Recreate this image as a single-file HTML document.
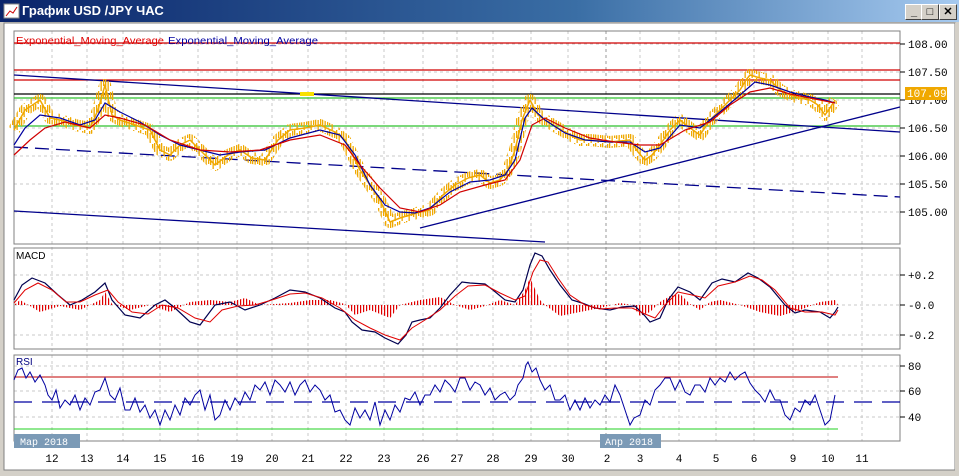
<!DOCTYPE html>
<html><head><meta charset="utf-8"><style>
body{margin:0;width:959px;height:476px;overflow:hidden;background:#d4d0c8;font-family:"Liberation Sans",sans-serif}
.tb{position:absolute;left:0;top:0;width:959px;height:22px;background:linear-gradient(90deg,#0a246a,#3a6ea5 60%,#a6caf0);}
.tt{position:absolute;left:22px;top:3px;color:#fff;font-weight:bold;font-size:13px;font-family:"Liberation Sans","DejaVu Sans",sans-serif}
.btn{position:absolute;top:4px;width:16px;height:14px;background:#d4d0c8;border:1px solid;border-color:#fff #404040 #404040 #fff;font-size:11px;font-weight:bold;text-align:center;line-height:14px}
svg{position:absolute;left:0;top:0}
</style></head><body>
<div class="tb"></div>
<svg width="18" height="18" style="left:3px;top:3px"><rect x="1" y="1" width="15" height="14" fill="#fff" stroke="#888"/><polyline points="3,13 7,8 10,10 14,4" stroke="#c00" fill="none"/></svg>
<div class="tt">График USD /JPY  ЧАС</div>
<div class="btn" style="left:905px">_</div><div class="btn" style="left:921px">□</div><div class="btn" style="left:939px">✕</div>
<svg width="959" height="476" style="top:0" font-family="Liberation Sans,sans-serif">
<defs>
<pattern id="hb" width="3" height="10" patternUnits="userSpaceOnUse"><rect width="1.2" height="10" fill="#e00000"/></pattern>
<pattern id="ob" width="7" height="13" patternUnits="userSpaceOnUse"><rect x="0" y="0" width="1.3" height="9" fill="#f0a800"/><rect x="2.5" y="3" width="1.3" height="10" fill="#f0a800"/><rect x="5" y="1" width="1.3" height="7" fill="#f0a800"/></pattern>
</defs>
<rect x="4" y="23" width="951" height="447" fill="#fff" stroke="#808080"/>
<rect x="955" y="23" width="4" height="453" fill="#d4d0c8"/>
<g stroke="#c8c8c8" stroke-dasharray="3,3">
<path d="M52 31V441M87 31V441M123 31V441M160 31V441M198 31V441M237 31V441M272 31V441M308 31V441M346 31V441M384 31V441M423 31V441M457 31V441M493 31V441M531 31V441M568 31V441M640 31V441M679 31V441M716 31V441M754 31V441M793 31V441M828 31V441M862 31V441"/>
<path d="M14 44H900M14 72H900M14 100H900M14 128H900M14 156H900M14 184H900M14 212H900M14 275H900M14 305H900M14 335H900M14 366H900M14 391H900M14 417H900"/>
</g>
<path d="M606 31V441" stroke="#999" stroke-dasharray="3,3"/>
<g fill="none" stroke="#808080"><rect x="14" y="31" width="886" height="213"/><rect x="14" y="248" width="886" height="101"/><rect x="14" y="355" width="886" height="86"/></g>
<g stroke-width="1.2">
<path d="M14 43H900M14 70H900M14 80H900" stroke="#d00000"/>
<path d="M14 94H900" stroke="#000"/>
<path d="M14 98H900M14 126H900" stroke="#2cc02c"/>
</g>
<text x="16" y="44" font-size="10" fill="#e00000" textLength="148" lengthAdjust="spacingAndGlyphs">Exponential_Moving_Average</text>
<text x="168" y="44" font-size="10" fill="#0000a0" textLength="150" lengthAdjust="spacingAndGlyphs">Exponential_Moving_Average</text>
<g stroke="#00008b" stroke-width="1.3" fill="none">
<path d="M14 75L900 132"/>
<path d="M14 147L900 197" stroke-dasharray="14,7"/>
<path d="M14 211L545 242"/>
<path d="M420 228L900 107"/>
</g>
<g fill="none" stroke-linejoin="round">
<polyline stroke="url(#ob)" stroke-width="12" points="14,130 25,110 40,100 50,118 60,120 75,125 90,128 98,110 105,85 112,115 120,120 135,125 150,130 160,150 170,155 180,145 190,140 200,150 215,165 228,155 240,150 252,158 265,160 278,140 290,130 305,128 320,125 335,132 345,140 355,160 360,170 370,185 380,200 390,222 400,218 410,215 420,212 430,210 443,195 455,185 468,178 480,175 490,183 500,180 508,170 515,150 522,120 530,100 538,115 545,120 558,128 570,135 580,140 590,140 610,142 630,140 638,152 645,160 652,155 660,145 670,130 680,120 690,128 700,135 710,120 720,110 730,100 740,90 746,80 750,75 760,78 770,80 780,90 790,95 800,98 810,100 818,105 825,115 830,108 835,100"/>
<polyline stroke="#f0a800" stroke-width="1.5" points="14,130 25,110 40,100 50,118 60,120 75,125 90,128 98,110 105,85 112,115 120,120 135,125 150,130 160,150 170,155 180,145 190,140 200,150 215,165 228,155 240,150 252,158 265,160 278,140 290,130 305,128 320,125 335,132 345,140 355,160 360,170 370,185 380,200 390,222 400,218 410,215 420,212 430,210 443,195 455,185 468,178 480,175 490,183 500,180 508,170 515,150 522,120 530,100 538,115 545,120 558,128 570,135 580,140 590,140 610,142 630,140 638,152 645,160 652,155 660,145 670,130 680,120 690,128 700,135 710,120 720,110 730,100 740,90 746,80 750,75 760,78 770,80 780,90 790,95 800,98 810,100 818,105 825,115 830,108 835,100"/>
</g>
<polyline fill="none" stroke="#0000a0" stroke-width="1.2" points="14,145 25,128 40,115 60,118 80,125 95,120 105,103 120,112 140,122 160,135 180,145 200,150 220,155 240,152 265,150 290,138 320,130 340,135 355,155 370,185 385,205 400,212 415,213 430,208 450,192 470,182 490,180 505,175 515,160 525,118 532,108 545,120 565,133 585,140 610,142 630,142 645,152 660,148 680,125 700,128 720,112 740,95 755,82 770,85 790,92 810,97 825,100 835,103"/>
<polyline fill="none" stroke="#d00000" stroke-width="1.2" points="14,155 30,140 45,128 65,122 90,128 105,115 120,118 145,125 170,140 200,150 230,152 260,150 290,140 320,135 345,145 360,165 380,188 400,208 420,212 440,205 460,192 485,185 505,180 520,160 532,125 545,118 565,128 590,138 615,142 640,145 660,145 685,130 710,122 730,105 750,92 770,88 790,94 810,98 835,103"/>
<rect x="300" y="92" width="14" height="4" fill="#f8e000"/>
<g font-size="11" fill="#000" font-family="Liberation Mono,monospace">
<path d="M900 44h5M900 72h5M900 100h5M900 128h5M900 156h5M900 184h5M900 212h5M900 275h5M900 305h5M900 335h5M900 366h5M900 391h5M900 417h5" stroke="#000"/>
<text x="908" y="48">108.00</text><text x="908" y="76">107.50</text><text x="908" y="104">107.00</text><text x="908" y="132">106.50</text><text x="908" y="160">106.00</text><text x="908" y="188">105.50</text><text x="908" y="216">105.00</text>
<rect x="905" y="87" width="42" height="13" fill="#f0a800"/><text x="907" y="97" fill="#fff">107.09</text>
<text x="908" y="279">+0.2</text><text x="908" y="309">-0.0</text><text x="908" y="339">-0.2</text>
<text x="908" y="370">80</text><text x="908" y="395">60</text><text x="908" y="421">40</text>
</g>
<text x="16" y="259" font-size="10" fill="#000">MACD</text>
<polygon fill="url(#hb)" points="14,305 20,300 30,306 40,312 60,306 80,310 100,300 105,292 112,304 130,310 150,305 170,312 190,302 210,300 230,302 245,298 260,305 290,303 310,300 330,300 345,304 355,315 370,310 390,318 400,305 420,300 440,297 455,305 470,310 485,306 500,300 515,305 525,290 530,278 540,300 545,305 560,316 580,312 600,308 620,303 632,305 640,316 650,312 660,302 670,296 680,294 690,304 700,310 710,302 720,300 740,305 760,312 780,316 800,310 820,302 835,300 838,305 14,305"/>
<polyline fill="none" stroke="#000050" stroke-width="1.2" points="14,300 22,285 32,278 45,283 58,295 70,305 82,300 95,292 105,283 112,300 125,315 140,318 155,305 165,300 175,308 190,322 200,325 215,305 230,302 245,310 260,305 275,298 290,290 305,292 320,298 335,308 345,312 352,322 362,330 375,332 385,338 398,344 406,335 412,322 420,320 430,318 440,308 450,295 462,282 470,283 485,284 493,290 505,300 515,302 523,290 530,265 535,253 542,256 550,270 560,285 572,300 582,303 595,308 610,310 622,307 635,306 645,316 650,322 660,318 668,300 678,287 690,292 700,300 712,283 722,279 735,282 748,273 758,278 770,287 785,305 795,313 805,310 820,312 830,318 835,312 838,307"/>
<polyline fill="none" stroke="#e00000" stroke-width="1" points="14,303 25,290 38,283 52,290 66,302 80,302 95,295 108,290 118,302 132,312 148,314 162,305 178,308 195,318 210,322 222,310 238,306 255,305 272,300 290,294 305,293 322,298 340,308 355,320 370,328 385,335 400,340 412,328 425,320 440,310 455,296 468,286 485,285 500,293 515,300 525,296 533,272 540,260 548,262 558,278 570,295 585,305 600,309 615,308 632,308 645,314 655,318 665,305 678,292 692,295 705,298 718,286 735,282 750,276 762,280 775,290 790,308 805,312 822,312 835,315 838,310"/>
<text x="16" y="365" font-size="10" fill="#000080">RSI</text>
<path d="M14 377H838" stroke="#c00000"/><path d="M14 429H838" stroke="#20d020"/>
<path d="M14 402H900" stroke="#0000a0" stroke-width="1.2" stroke-dasharray="18,10"/>
<polyline fill="none" stroke="#0000a0" stroke-width="1" points="14,380 18,370 22,368 26,378 30,372 35,382 40,375 45,385 48,395 52,400 56,390 60,408 65,400 70,405 75,395 80,410 85,398 90,405 95,392 100,390 105,378 110,395 115,400 120,388 125,410 130,410 135,398 140,412 145,405 150,418 155,410 160,425 165,410 170,420 175,405 180,415 185,398 190,405 195,395 200,390 205,410 210,395 215,420 220,415 225,400 230,410 235,398 240,405 245,392 250,400 255,385 260,390 265,382 270,395 275,380 280,385 285,392 290,382 295,395 300,385 305,380 310,392 315,385 320,390 325,400 330,395 335,412 340,410 345,420 350,425 355,408 360,418 365,410 370,420 375,402 380,425 385,410 390,420 395,405 400,412 405,398 410,400 415,392 420,405 425,395 430,395 435,385 440,392 445,380 450,385 455,392 460,378 465,378 470,390 475,382 480,385 485,395 490,388 495,400 500,395 505,392 510,400 515,395 518,385 523,378 526,365 528,362 532,372 536,368 540,380 545,390 550,385 555,400 560,400 565,395 570,410 575,400 580,410 585,398 590,408 595,400 600,405 605,395 610,402 615,385 620,395 625,410 630,425 634,418 640,415 645,400 650,405 655,390 660,385 665,378 670,378 675,390 680,380 685,392 690,395 695,385 700,385 705,392 710,378 715,385 720,378 725,382 730,372 735,380 740,375 745,372 750,383 755,390 760,395 765,402 770,390 775,400 780,400 785,415 790,420 795,408 800,412 805,400 810,405 815,395 820,410 825,425 830,420 835,395"/>
<rect x="14" y="434" width="66" height="14" fill="#7b9ab6"/><text x="20" y="445" font-size="10" fill="#fff" font-family="Liberation Mono,monospace">Мар 2018</text>
<rect x="600" y="434" width="61" height="14" fill="#7b9ab6"/><text x="605" y="445" font-size="10" fill="#fff" font-family="Liberation Mono,monospace">Апр 2018</text>
<g font-size="11" fill="#000" text-anchor="middle" font-family="Liberation Mono,monospace">
<text x="52" y="462">12</text><text x="87" y="462">13</text><text x="123" y="462">14</text><text x="160" y="462">15</text><text x="198" y="462">16</text><text x="237" y="462">19</text><text x="272" y="462">20</text><text x="308" y="462">21</text><text x="346" y="462">22</text><text x="384" y="462">23</text><text x="423" y="462">26</text><text x="457" y="462">27</text><text x="493" y="462">28</text><text x="531" y="462">29</text><text x="568" y="462">30</text><text x="607" y="462">2</text><text x="640" y="462">3</text><text x="679" y="462">4</text><text x="716" y="462">5</text><text x="754" y="462">6</text><text x="793" y="462">9</text><text x="828" y="462">10</text><text x="862" y="462">11</text>
</g>
</svg>
</body></html>
